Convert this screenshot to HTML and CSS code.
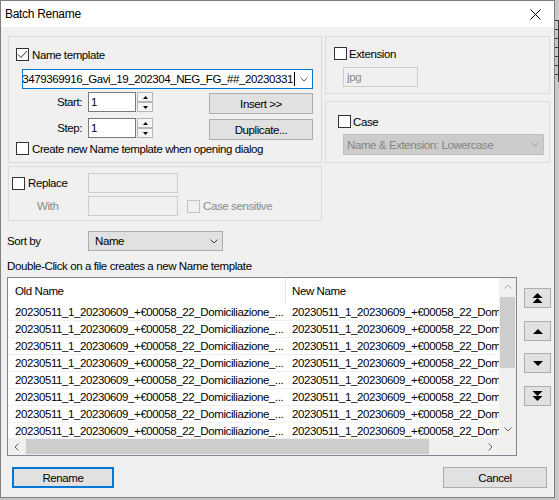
FILE: index.html
```html
<!DOCTYPE html>
<html>
<head>
<meta charset="utf-8">
<link rel="stylesheet" href="styles.css">
</head>
<body>
<div class="desk">
  <div class="win">
    <div class="titlebar">
      <span class="title">Batch Rename</span>
      <svg class="close" width="11" height="11" viewBox="0 0 11 11"><path d="M0.5 0.5L10.5 10.5M10.5 0.5L0.5 10.5" stroke="#000" stroke-width="1" fill="none"/></svg>
    </div>
    <div class="client">
      <div class="top">
        <div class="col-left">
          <div class="group name-group">
            <div class="chk-row ng-head">
              <span class="chk"><svg width="11" height="11" viewBox="0 0 11 11"><path d="M1 5.5L4 8.5L10 2" stroke="#333" stroke-width="1" fill="none"/></svg></span>
              <span>Name template</span>
            </div>
            <div class="combo focus ng-combo">
              <div class="combo-text"><span>3479369916_Gavi_19_202304_NEG_FG_##_20230331</span><span class="caret"></span></div>
              <span class="combo-arrow"><svg width="8" height="5" viewBox="0 0 8 5"><path d="M0.5 0.5L4 4L7.5 0.5" stroke="#606060" fill="none"/></svg></span>
            </div>
            <div class="spin-row">
              <span class="spin-label">Start:</span>
              <span class="textbox spin-input">1</span>
              <span class="spinner">
                <span class="sp-btn"><svg width="5" height="3" viewBox="0 0 5 3"><path d="M0 3L2.5 0L5 3Z" fill="#000"/></svg></span>
                <span class="sp-btn"><svg width="5" height="3" viewBox="0 0 5 3"><path d="M0 0L2.5 3L5 0Z" fill="#000"/></svg></span>
              </span>
              <span class="btn side-btn">Insert &gt;&gt;</span>
            </div>
            <div class="spin-row">
              <span class="spin-label">Step:</span>
              <span class="textbox spin-input">1</span>
              <span class="spinner">
                <span class="sp-btn"><svg width="5" height="3" viewBox="0 0 5 3"><path d="M0 3L2.5 0L5 3Z" fill="#000"/></svg></span>
                <span class="sp-btn"><svg width="5" height="3" viewBox="0 0 5 3"><path d="M0 0L2.5 3L5 0Z" fill="#000"/></svg></span>
              </span>
              <span class="btn side-btn">Duplicate...</span>
            </div>
            <div class="chk-row ng-foot">
              <span class="chk"></span>
              <span>Create new Name template when opening dialog</span>
            </div>
          </div>
          <div class="group replace-group">
            <div class="chk-row"><span class="chk"></span><span>Replace</span></div>
            <span class="textbox disabled"></span>
            <span></span>
            <span class="with-label">With</span>
            <span class="textbox disabled"></span>
            <div class="chk-row cs-row"><span class="chk disabled"></span><span class="muted">Case sensitive</span></div>
          </div>
        </div>
        <div class="col-right">
          <div class="group ext-group">
            <div class="chk-row ext-head"><span class="chk"></span><span>Extension</span></div>
            <div class="textbox disabled ext-input">jpg</div>
          </div>
          <div class="group case-group">
            <div class="chk-row case-head"><span class="chk"></span><span>Case</span></div>
            <div class="combo disabled case-combo">
              <div class="combo-text left">Name &amp; Extension: Lowercase</div>
              <span class="combo-arrow"><svg width="8" height="5" viewBox="0 0 8 5"><path d="M0.5 0.5L4 4L7.5 0.5" stroke="#a0a0a0" fill="none"/></svg></span>
            </div>
          </div>
        </div>
      </div>

      <div class="sort-row">
        <span class="sort-label">Sort by</span>
        <div class="combo list-combo">
          <div class="combo-text left">Name</div>
          <span class="combo-arrow"><svg width="8" height="5" viewBox="0 0 8 5"><path d="M0.5 0.5L4 4L7.5 0.5" stroke="#404040" fill="none"/></svg></span>
        </div>
      </div>

      <div class="hint">Double-Click on a file creates a new Name template</div>

      <div class="list-row">
        <div class="list">
          <div class="lv-content">
            <div class="lv-header">
              <div class="lv-h1">Old Name</div>
              <div class="lv-h2">New Name</div>
            </div>
            <div class="lv-row"><div class="c1">20230511_1_20230609_+€00058_22_Domiciliazione_...</div><div class="c2">20230511_1_20230609_+€00058_22_Domiciliazione_...</div></div>
            <div class="lv-row"><div class="c1">20230511_1_20230609_+€00058_22_Domiciliazione_...</div><div class="c2">20230511_1_20230609_+€00058_22_Domiciliazione_...</div></div>
            <div class="lv-row"><div class="c1">20230511_1_20230609_+€00058_22_Domiciliazione_...</div><div class="c2">20230511_1_20230609_+€00058_22_Domiciliazione_...</div></div>
            <div class="lv-row"><div class="c1">20230511_1_20230609_+€00058_22_Domiciliazione_...</div><div class="c2">20230511_1_20230609_+€00058_22_Domiciliazione_...</div></div>
            <div class="lv-row"><div class="c1">20230511_1_20230609_+€00058_22_Domiciliazione_...</div><div class="c2">20230511_1_20230609_+€00058_22_Domiciliazione_...</div></div>
            <div class="lv-row"><div class="c1">20230511_1_20230609_+€00058_22_Domiciliazione_...</div><div class="c2">20230511_1_20230609_+€00058_22_Domiciliazione_...</div></div>
            <div class="lv-row"><div class="c1">20230511_1_20230609_+€00058_22_Domiciliazione_...</div><div class="c2">20230511_1_20230609_+€00058_22_Domiciliazione_...</div></div>
            <div class="lv-row"><div class="c1">20230511_1_20230609_+€00058_22_Domiciliazione_...</div><div class="c2">20230511_1_20230609_+€00058_22_Domiciliazione_...</div></div>
          </div>
          <div class="vscroll">
            <span class="sb-btn"><svg width="8" height="5" viewBox="0 0 8 5"><path d="M0.5 4.5L4 1L7.5 4.5" stroke="#a8a8a8" fill="none"/></svg></span>
            <span class="vthumb"></span>
            <span class="sb-btn down"><svg width="8" height="5" viewBox="0 0 8 5"><path d="M0.5 0.5L4 4L7.5 0.5" stroke="#606060" fill="none"/></svg></span>
          </div>
          <div class="hscroll">
            <span class="sb-btn h"><svg width="5" height="8" viewBox="0 0 5 8"><path d="M4.5 0.5L1 4L4.5 7.5" stroke="#606060" fill="none"/></svg></span>
            <span class="hthumb"></span>
            <span class="sb-btn h right"><svg width="5" height="8" viewBox="0 0 5 8"><path d="M0.5 0.5L4 4L0.5 7.5" stroke="#606060" fill="none"/></svg></span>
          </div>
          <div class="corner"></div>
        </div>
        <div class="movebtns">
          <span class="btn mbtn m1"><svg width="11" height="10" viewBox="0 0 11 10"><path d="M0.5 5L5.5 0L10.5 5Z M0.5 10L5.5 5L10.5 10Z" fill="#000"/></svg></span>
          <span class="btn mbtn m2"><svg width="10" height="5" viewBox="0 0 10 5"><path d="M0 5L5 0L10 5Z" fill="#000"/></svg></span>
          <span class="btn mbtn m3"><svg width="10" height="5" viewBox="0 0 10 5"><path d="M0 0L5 5L10 0Z" fill="#000"/></svg></span>
          <span class="btn mbtn m4"><svg width="11" height="10" viewBox="0 0 11 10"><path d="M0.5 0L5.5 5L10.5 0Z M0.5 5L5.5 10L10.5 5Z" fill="#000"/></svg></span>
        </div>
      </div>

      <div class="bottom-row">
        <span class="btn default rename-btn">Rename</span>
        <span class="btn cancel-btn">Cancel</span>
      </div>
    </div>
  </div>
  <div class="edge"><div class="edge-ticks"></div></div>
</div>
</body>
</html>
```

FILE: styles.css
```css
* { box-sizing: border-box; }

body {
  margin: 0;
  width: 559px;
  height: 500px;
  overflow: hidden;
  background: #c4c4c4;
  font-family: "Liberation Sans", Arial, sans-serif;
  font-size: 11.5px;
  letter-spacing: -0.4px;
  color: #000;
}

.desk { display: flex; height: 500px; }

.win {
  width: 555px;
  height: 498px;
  flex: none;
  border: 1px solid #7f7f7f;
  background: #f0f0f0;
  display: flex;
  flex-direction: column;
}

.titlebar {
  height: 26px;
  flex: none;
  background: #fff;
  display: flex;
  align-items: center;
  padding-left: 4px;
}
.title { font-size: 12px; letter-spacing: -0.3px; }
.close { margin-left: auto; margin-right: 13px; }

.client {
  flex: 1;
  display: flex;
  flex-direction: column;
  padding: 9px 0 0 6px;
}

.top { display: flex; gap: 3px; margin-left: 1px; }
.col-left { width: 314px; display: flex; flex-direction: column; gap: 3px; }
.col-right { width: 225px; display: flex; flex-direction: column; gap: 7px; }

.group { border: 1px solid #dcdcdc; }
.name-group { height: 127px; }
.replace-group { height: 55px; }
.ext-group { height: 58px; }
.case-group { height: 62px; }

.chk {
  width: 13px;
  height: 13px;
  flex: none;
  border: 1px solid #333;
  background: #fff;
  display: flex;
  align-items: center;
  justify-content: center;
}
.chk.disabled { border-color: #c4c4c4; background: #f0f0f0; }

.chk-row { display: flex; align-items: center; gap: 3px; height: 13px; white-space: nowrap; }
.muted { color: #8a8a8a; }

.ng-head { margin: 11px 0 0 7px; }
.ng-foot { margin: 4px 0 0 7px; }

.combo {
  display: flex;
  height: 20px;
  border: 1px solid #7a7a7a;
  background: #fff;
}
.combo.focus { border-color: #0078d7; }
.combo.disabled { background: #cccccc; border-color: #bfbfbf; color: #838383; }
.combo-text {
  flex: 1;
  overflow: hidden;
  display: flex;
  justify-content: flex-end;
  align-items: center;
  white-space: nowrap;
}
.combo-text.left { justify-content: flex-start; padding-left: 6px; }
.caret { width: 1px; height: 14px; background: #000; flex: none; margin-left: 1px; }
.combo-arrow { width: 17px; flex: none; display: flex; align-items: center; justify-content: center; }

.ng-combo { margin: 8px 8px 0 13px; }

.spin-row { display: flex; align-items: flex-start; height: 20px; margin-top: 3px; }
.spin-row + .spin-row { margin-top: 6px; }
.spin-label { width: 73px; text-align: right; margin-right: 6px; line-height: 20px; }

.textbox {
  height: 20px;
  border: 1px solid #7a7a7a;
  background: #fff;
  padding-left: 2px;
  line-height: 18px;
  white-space: nowrap;
}
.textbox.disabled { background: #f0f0f0; border-color: #cccccc; color: #8a8a8a; }
.spin-input { width: 48px; }

.spinner { width: 16px; height: 20px; margin-left: 1px; display: flex; flex-direction: column; }
.sp-btn {
  flex: 1;
  display: flex;
  align-items: center;
  justify-content: center;
  border: 1px solid #b5b5b5;
  background: #f4f4f4;
}

.btn {
  border: 1px solid #adadad;
  background: #e1e1e1;
  display: flex;
  align-items: center;
  justify-content: center;
  white-space: nowrap;
}
.btn.default { border: 2px solid #0078d7; }
.side-btn { width: 104px; height: 21px; margin-left: auto; margin-right: 8px; margin-top: 1px; }

.replace-group {
  display: grid;
  grid-template-columns: 76px 90px auto;
  grid-template-rows: 20px 20px;
  row-gap: 3px;
  align-items: center;
  padding: 6px 0 0 3px;
}
.with-label { color: #8a8a8a; padding-left: 25px; }
.cs-row { margin-left: 9px; }

.ext-head { margin: 10px 0 0 8px; gap: 2px; }
.ext-input { margin: 7px 0 0 17px; width: 75px; padding-left: 3px; }

.case-head { margin: 13px 0 0 12px; gap: 2px; }
.case-combo { margin: 6px 0 0 17px; width: 201px; height: 21px; }
.case-combo .combo-text.left { padding-left: 3px; }

.sort-row { display: flex; align-items: center; height: 20px; margin-top: 10px; }
.sort-label { width: 81px; }
.list-combo { width: 135px; background: #e1e1e1; border-color: #adadad; }

.hint { margin-top: 8px; line-height: 15px; height: 15px; }

.list-row { display: flex; margin-top: 3px; }
.list {
  width: 510px;
  height: 179px;
  border: 1px solid #828790;
  background: #fff;
  display: grid;
  grid-template-columns: 491px 17px;
  grid-template-rows: 160px 17px;
}
.lv-content { overflow: hidden; }
.lv-header { display: flex; height: 26px; align-items: stretch; }
.lv-h1 {
  width: 278px;
  flex: none;
  padding-left: 7px;
  border-right: 1px solid #e5e5e5;
  display: flex;
  align-items: center;
}
.lv-h2 { padding-left: 6px; display: flex; align-items: center; }
.lv-row {
  display: flex;
  height: 17px;
  align-items: center;
  white-space: nowrap;
  border-bottom: 1px solid #f0f0f0;
}
.c1 { width: 278px; flex: none; padding-left: 7px; overflow: hidden; }
.c2 { width: 213px; flex: none; padding-left: 6px; overflow: hidden; }

.vscroll { background: #f0f0f0; display: flex; flex-direction: column; }
.sb-btn { height: 17px; flex: none; display: flex; align-items: center; justify-content: center; }
.sb-btn.down { margin-top: auto; }
.vthumb { margin: 2px 0 0 1px; width: 15px; height: 71px; background: #cdcdcd; flex: none; }

.hscroll { background: #f0f0f0; display: flex; }
.sb-btn.h { width: 17px; height: 17px; }
.sb-btn.right { margin-left: auto; }
.hthumb { margin: 1px 0 0 1px; height: 15px; width: 403px; background: #cdcdcd; flex: none; }
.corner { background: #f0f0f0; }

.movebtns { display: flex; flex-direction: column; margin-left: 7px; }
.mbtn { width: 27px; height: 20px; }
.m1 { margin-top: 11px; }
.m2 { margin-top: 13px; }
.m3 { margin-top: 12px; }
.m4 { margin-top: 13px; }

.bottom-row { display: flex; margin-top: 11px; }
.rename-btn { width: 102px; height: 21px; margin-left: 5px; }
.cancel-btn { width: 104px; height: 21px; margin-left: auto; margin-right: 7px; }

.edge { flex: none; width: 4px; height: 500px; background: #c8c8c8; }
.edge-ticks {
  margin-top: 20px;
  height: 62px;
  width: 4px;
  border-right: 1px solid #3a3a3a;
  background: repeating-linear-gradient(to bottom, #3a3a3a 0 1px, transparent 1px 9px);
}
```
